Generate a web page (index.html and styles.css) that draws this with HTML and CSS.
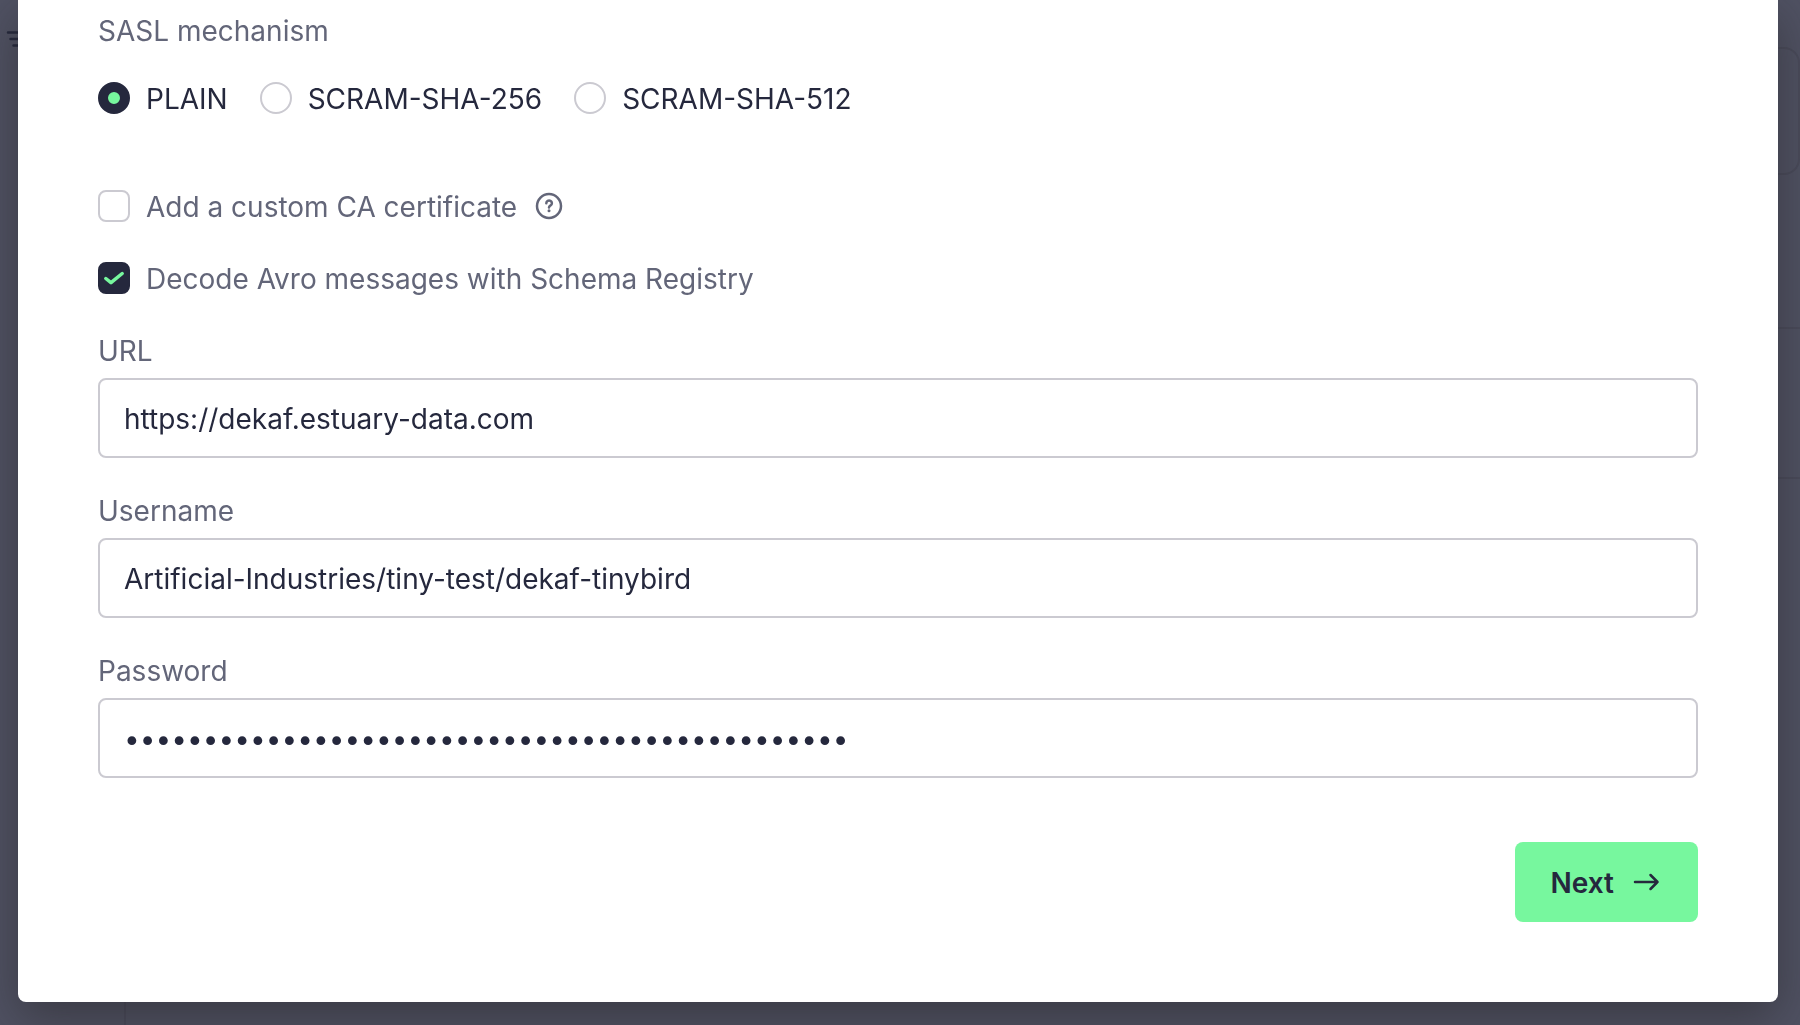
FILE: index.html
```
<!DOCTYPE html>
<html lang="en">
<head>
    <meta charset="UTF-8">
    <meta name="viewport" content="width=device-width, initial-scale=1.0">
    <title>Connect to Kafka</title>
    <link rel="stylesheet" href="styles.css">
</head>
<body>
    <!-- Dimmed page behind the dialog -->
    <div class="page-behind" aria-hidden="true">
        <div class="sidebar">
            <svg class="filter-icon" width="24" height="18" viewBox="0 0 24 18" fill="none" stroke="#25283d" stroke-width="2.5" stroke-linecap="round">
                <path d="M3 2.5h20M5.500 9h16M8.500 15.500h10"/>
            </svg>
        </div>
        <div class="content">
            <div class="panel"></div>
            <div class="row"></div>
            <div class="row"></div>
        </div>
    </div>

    <form class="modal" role="dialog">
        <fieldset class="mechanism">
            <legend class="label">SASL mechanism</legend>
            <div class="radios">
                <label class="option"><input type="radio" name="mechanism" value="PLAIN" checked>PLAIN</label>
                <label class="option"><input type="radio" name="mechanism" value="SCRAM-SHA-256">SCRAM-SHA-256</label>
                <label class="option"><input type="radio" name="mechanism" value="SCRAM-SHA-512">SCRAM-SHA-512</label>
            </div>
        </fieldset>

        <div class="check-row">
            <input type="checkbox" id="custom-ca">
            <label class="label" for="custom-ca">Add a custom CA certificate</label>
            <svg class="help-icon" width="32" height="32" viewBox="0 0 32 32" fill="none" stroke="currentColor" stroke-width="2.500" stroke-linecap="round" stroke-linejoin="round">
                <circle cx="16" cy="16" r="12"/>
                <path d="M13.300 13.200a2.800 2.600 0 1 1 4.300 2.200c-1 .6-1.600 1-1.600 2"/>
                <circle cx="16" cy="20.800" r="1.500" fill="currentColor" stroke="none"/>
            </svg>
        </div>

        <div class="check-row">
            <span class="check">
                <input type="checkbox" id="schema-registry" checked>
                <svg class="tick" viewBox="0 0 32 32" fill="none" stroke="#77f79e" stroke-width="3.500" stroke-linecap="round" stroke-linejoin="round">
                    <path d="M7.800 16.500l5.200 4.200L24.200 11.500"/>
                </svg>
            </span>
            <label class="label" for="schema-registry">Decode Avro messages with Schema Registry</label>
        </div>

        <div class="form-group">
            <label class="label" for="url">URL</label>
            <input class="field" type="text" id="url" value="https://dekaf.estuary-data.com">
        </div>

        <div class="form-group">
            <label class="label" for="username">Username</label>
            <input class="field" type="text" id="username" value="Artificial-Industries/tiny-test/dekaf-tinybird">
        </div>

        <div class="form-group">
            <label class="label" for="password">Password</label>
            <input class="field" type="password" id="password" value="0123456789012345678901234567890123456789012345">
        </div>

        <div class="actions">
            <button class="next" type="button">
                Next
                <svg width="32" height="32" viewBox="0 0 32 32" fill="none" stroke="currentColor" stroke-width="2.500" stroke-linecap="round" stroke-linejoin="round">
                    <path d="M5 15h22.500M20.500 8l7 7-7 7"/>
                </svg>
            </button>
        </div>
    </form>
</body>
</html>
```

FILE: styles.css
```
* {
    box-sizing: border-box;
}
body {
    margin: 0;
    min-height: 100vh;
    overflow: hidden;
    font-family: Inter, sans-serif;
    font-size: 28px;
    line-height: 42px;
    color: #25283d;
    background-color: #505263;
}

/* Page behind the dialog */
.page-behind {
    position: fixed;
    inset: 0;
    display: flex;
}
.sidebar {
    width: 126px;
    padding: 30px 5px;
    border-right: 2px solid #4a4b5c;
}
.filter-icon {
    display: block;
}
.content {
    flex: 1;
    padding-top: 47px;
}
.panel {
    height: 128px;
    margin-bottom: 152px;
    border: 2px solid #4a4b5b;
    border-radius: 16px;
}
.row {
    height: 150px;
    border-top: 2px solid #4a4b5b;
}

/* Dialog */
.modal {
    position: relative;
    margin: 0 22px 0 18px;
    padding: 10px 80px 80px;
    background: #fff;
    border-radius: 0 0 8px 8px;
    box-shadow: 0 16px 48px rgba(36, 34, 36, 0.5);
}
.label {
    color: #636679;
}
.mechanism {
    margin: 0 0 66px;
    padding: 0;
    border: none;
}
.mechanism legend {
    padding: 0;
    margin-bottom: 26px;
}
.radios {
    display: flex;
    gap: 32px;
}
.option,
.check-row {
    display: flex;
    align-items: flex-start;
    gap: 16px;
}
.check-row {
    margin-bottom: 30px;
}
input[type="radio"],
input[type="checkbox"] {
    appearance: none;
    flex: none;
    display: block;
    width: 32px;
    height: 32px;
    margin: 4px 0 0;
    border: 2px solid #cbcad1;
    border-radius: 8px;
    background: #fff;
}
input[type="radio"] {
    border-radius: 50%;
}
input[type="radio"]:checked {
    border: 10px solid #25283d;
    background: #77f79e;
}
input[type="checkbox"]:checked {
    border-color: #25283d;
    background: #25283d;
}
.check {
    position: relative;
}
.tick {
    position: absolute;
    top: 4px;
    left: 0;
    width: 32px;
    height: 32px;
    pointer-events: none;
}
.check input:not(:checked) + .tick {
    display: none;
}
.help-icon {
    margin-top: 4px;
    color: #636679;
}
.form-group {
    margin-bottom: 32px;
}
.form-group .label {
    display: block;
    margin-bottom: 6px;
}
.field {
    display: block;
    width: 100%;
    height: 80px;
    padding: 2px 24px 0;
    border: 2px solid #cbcad1;
    border-radius: 8px;
    background: #fff;
    font: inherit;
    color: inherit;
}
.actions {
    display: flex;
    justify-content: flex-end;
    padding-top: 32px;
}
.next {
    display: flex;
    align-items: center;
    gap: 16px;
    height: 80px;
    padding: 2px 36px 0;
    border: none;
    border-radius: 8px;
    background: #77f79e;
    color: #25283d;
    font: inherit;
    font-weight: 600;
    cursor: pointer;
}
```
